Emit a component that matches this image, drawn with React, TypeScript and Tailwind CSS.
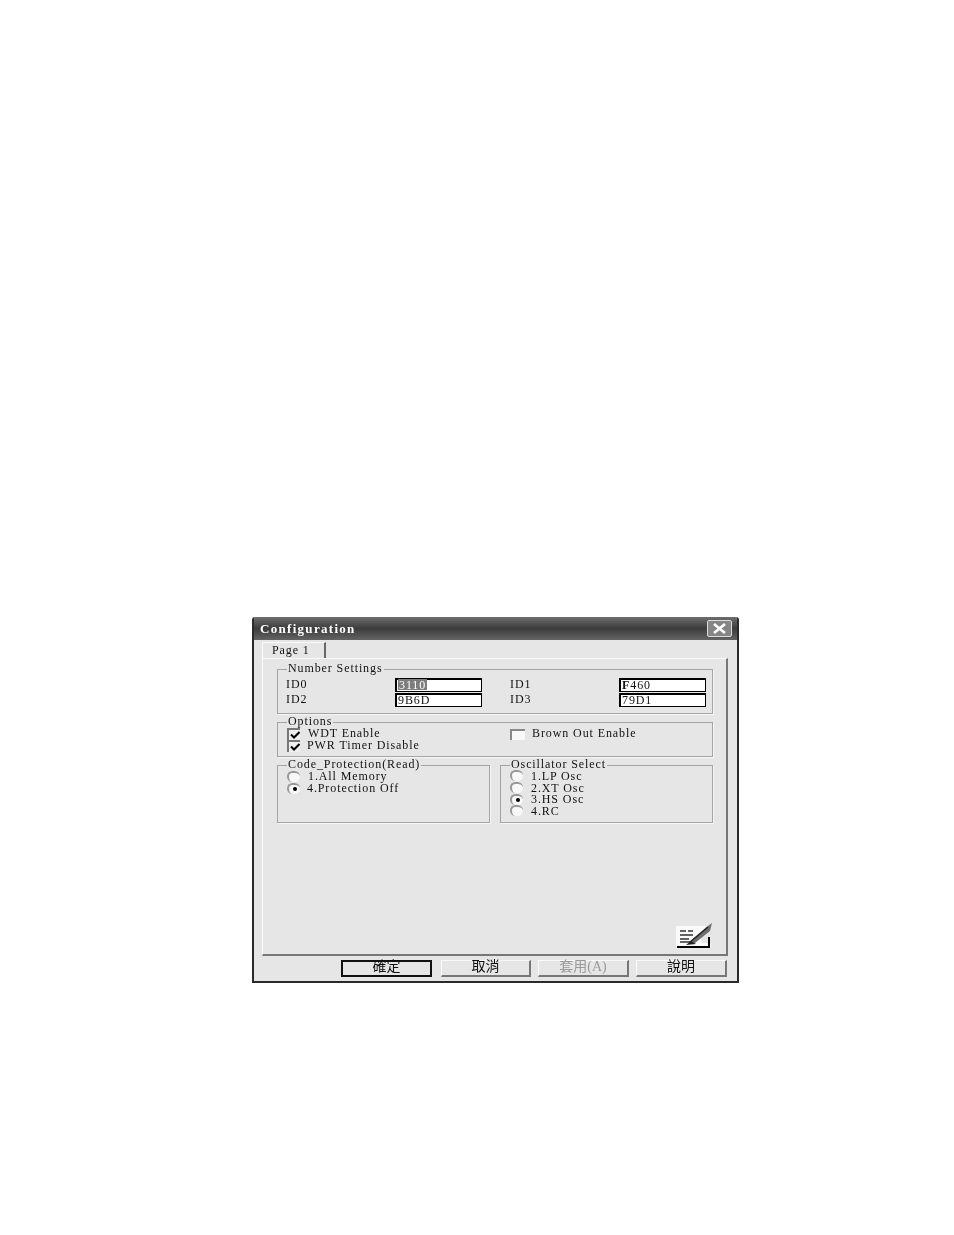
const serif = "font-['Liberation_Serif','Noto_Sans_CJK_TC',serif]";

function Check() {
  return (
    <span className="w-[13px] h-[12px] bg-[#efefef] border-l-2 border-t-2 border-[#777] flex items-center justify-center shrink-0">
      <svg width="10" height="8" viewBox="0 0 10 8">
        <path d="M1 3.5 L4 6.5 L9.5 1" fill="none" stroke="#000" strokeWidth="2" />
      </svg>
    </span>
  );
}

function Radio({ on }: { on?: boolean }) {
  return (
    <span className="w-[13px] h-[11px] rounded-full bg-[#f8f8f8] border-l-2 border-t-2 border-[#999] flex items-center justify-center shrink-0">
      {on && <span className="w-[4px] h-[4px] rounded-full bg-black" />}
    </span>
  );
}

function IdRow({ label, value, selected }: { label: string; value: React.ReactNode; selected?: boolean }) {
  return (
    <div className="flex items-start h-[15px]">
      <span className="w-[109px] shrink-0 leading-[13px]">{label}</span>
      <div className="h-[14px] flex-1 bg-white border-t-2 border-l-2 border-b border-r border-black flex items-center px-[1px] pb-[2px] leading-none">
        {selected ? (
          <span className="bg-[#7d7d7d] text-white px-[1px] h-[11px] flex items-center">{value}</span>
        ) : (
          <span>{value}</span>
        )}
      </div>
    </div>
  );
}

function Group({ title, className, children }: { title: string; className?: string; children: React.ReactNode }) {
  return (
    <fieldset className={`border border-[#a4a4a4] shadow-[1px_1px_0_#f6f6f6] ${className ?? ""}`}>
      <legend className="ml-[9px] px-[1px] h-[13px] leading-[11px]">{title}</legend>
      {children}
    </fieldset>
  );
}

function DlgButton({ label, className }: { label: string; className?: string }) {
  return (
    <div className={`h-[17px] bg-[#e6e6e6] border-t border-l border-[#fafafa] border-r-2 border-b-2 border-r-[#777] border-b-[#777] flex items-center justify-center pb-[2px] text-[14px] leading-none tracking-[0px] ${className ?? ""}`}>
      {label}
    </div>
  );
}

export default function App() {
  return (
    <div className={`min-h-[1235px] bg-white pt-[617px] pl-[252px] text-[12px] tracking-[0.9px] text-[#111] ${serif}`}>
      <div className="w-[487px] h-[366px] flex flex-col bg-[#e6e6e6] border-x-2 border-b-2 border-[#2a2a2a] rounded-t-[3px] overflow-hidden blur-[0.35px]">
        {/* title bar */}
        <div className="h-[23px] -mx-[2px] flex items-center justify-between pl-[8px] pr-[7px] bg-gradient-to-b from-[#6e6e6e] via-[#3c3c3c] to-[#646464]">
          <span className="text-white font-bold text-[13px] tracking-[1.3px]">Configuration</span>
          <div className="w-[25px] h-[17px] rounded-[2px] border border-[#dcdcdc] bg-[#858585] flex items-center justify-center">
            <svg width="15" height="11" viewBox="0 0 15 11">
              <path d="M2 1 L13 10 M13 1 L2 10" stroke="#fff" strokeWidth="2.6" />
            </svg>
          </div>
        </div>

        {/* tab strip */}
        <div className="h-[18px] pl-[8px] pt-[2px] flex items-end">
          <div className="w-[64px] h-[16px] pl-[9px] pb-[2px] border-t border-l border-[#fafafa] border-r-2 border-r-[#666] flex items-center">
            Page 1
          </div>
        </div>

        {/* page */}
        <div className="ml-[8px] w-[466px] h-[298px] flex flex-col border-t border-l border-[#fafafa] border-r-2 border-r-[#777] border-b-2 border-b-[#777] pl-[14px] pr-[13px] pt-[4px] pb-[6px]">
          <Group title="Number Settings" className="h-[51px]">
            <div className="grid grid-cols-2 gap-x-[28px] pl-[8px] pr-[6px] pt-[2px]">
              <IdRow label="ID0" value="3110" selected />
              <IdRow label="ID1" value={<><b>F</b>460</>} />
              <IdRow label="ID2" value="9B6D" />
              <IdRow label="ID3" value="79D1" />
            </div>
          </Group>

          <Group title="Options" className="h-[41px] mt-[2px]">
            <div className="grid grid-cols-[223px_1fr] pl-[9px] -mt-[1px] leading-[12px]">
              <div className="flex items-center gap-[8px] h-[12px]"><Check /><span className="-mt-[2px]">WDT Enable</span></div>
              <div className="flex items-center gap-[7px] h-[12px]">
                <span className="w-[15px] h-[11px] bg-[#f8f8f8] border-l-2 border-t-2 border-[#888] shrink-0" />
                <span className="-mt-[2px]">Brown Out Enable</span>
              </div>
              <div className="flex items-center gap-[7px] h-[12px]"><Check /><span className="-mt-[2px]">PWR Timer Disable</span></div>
            </div>
          </Group>

          <div className="flex gap-[10px] mt-[2px]">
            <Group title="Code_Protection(Read)" className="w-[213px] h-[64px]">
              <div className="pl-[9px] -mt-[2px] leading-[12px]">
                <div className="flex items-center gap-[8px] h-[12px]"><Radio /><span>1.All Memory</span></div>
                <div className="flex items-center gap-[7px] h-[12px]"><Radio on /><span>4.Protection Off</span></div>
              </div>
            </Group>
            <Group title="Oscillator Select" className="flex-1 h-[64px]">
              <div className="pl-[9px] -mt-[2px] leading-[12px]">
                <div className="flex items-center gap-[8px] h-[11.7px]"><Radio /><span>1.LP Osc</span></div>
                <div className="flex items-center gap-[8px] h-[11.7px]"><Radio /><span>2.XT Osc</span></div>
                <div className="flex items-center gap-[8px] h-[11.7px]"><Radio on /><span>3.HS Osc</span></div>
                <div className="flex items-center gap-[8px] h-[11.7px]"><Radio /><span>4.RC</span></div>
              </div>
            </Group>
          </div>

          <svg className="mt-auto self-end" width="39" height="26" viewBox="0 0 39 26">
            <path d="M2 4 H32 L27 12 V21 H37 V25 H2 Z" fill="#fafafa" />
            <path d="M35 15 V25 H3" fill="none" stroke="#000" strokeWidth="2" />
            <path d="M6 9 h6 M14 9 h5 M6 13 h13 M6 17 h9 M6 20 h11" stroke="#333" strokeWidth="1.6" />
            <path d="M14 21 L34 4 L38 1 L36 9 L21 21 Z" fill="#6e6e6e" />
            <path d="M15 21 L34 5" stroke="#222" strokeWidth="1.4" />
            <path d="M12 23 L17 19 L22 22 Z" fill="#222" />
          </svg>
        </div>

        {/* buttons */}
        <div className="flex justify-end gap-[7px] pt-[4px] pr-[10px]">
          <DlgButton label="確定" className="w-[91px] mr-[2px] !border-2 !border-[#111] !pb-[3px]" />
          <DlgButton label="取消" className="w-[90px]" />
          <DlgButton label="套用(A)" className="w-[91px] text-[#9a9a9a]" />
          <DlgButton label="說明" className="w-[91px]" />
        </div>
      </div>
    </div>
  );
}
